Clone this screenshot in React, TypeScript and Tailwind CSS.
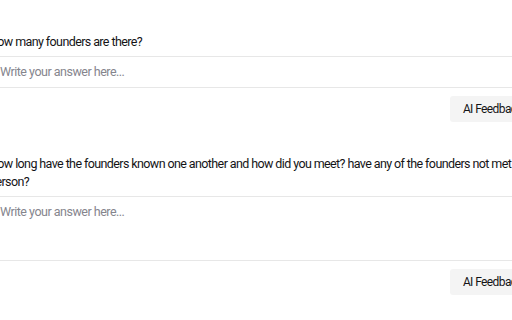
import React from "react";

const questions = [
  { id: "founders", text: "How many founders are there?", rows: "h-[32px]" },
  {
    id: "met",
    text: "How long have the founders known one another and how did you meet? have any of the founders not met in person?",
    rows: "h-[65px]",
  },
];

export default function App() {
  return (
    <main className="min-h-screen overflow-hidden bg-white font-['Roboto',sans-serif] text-[#141416]">
      <div className="-ml-[11px] w-[546px] pt-[33px]">
        {questions.map((q, i) => (
          <section key={q.id} className={i > 0 ? "mt-[33px]" : ""}>
            <p className="text-[12.5px] leading-[18px] tracking-[-0.6px]">{q.text}</p>
            <textarea
              placeholder="Write your answer here..."
              className={`mt-[5px] block w-full resize-none border-y border-[#e7e7e7] px-[11px] py-[7px] text-[12.5px] leading-[16px] tracking-[-0.5px] outline-none placeholder:text-[#85858d] ${q.rows}`}
            />
            <div className="mt-[8px] flex justify-end">
              <button className="h-[26px] rounded-[3px] bg-[#f4f4f4] px-[13px] text-[12px] tracking-[-0.6px] text-[#141416]">
                AI Feedback
              </button>
            </div>
          </section>
        ))}
      </div>
    </main>
  );
}
